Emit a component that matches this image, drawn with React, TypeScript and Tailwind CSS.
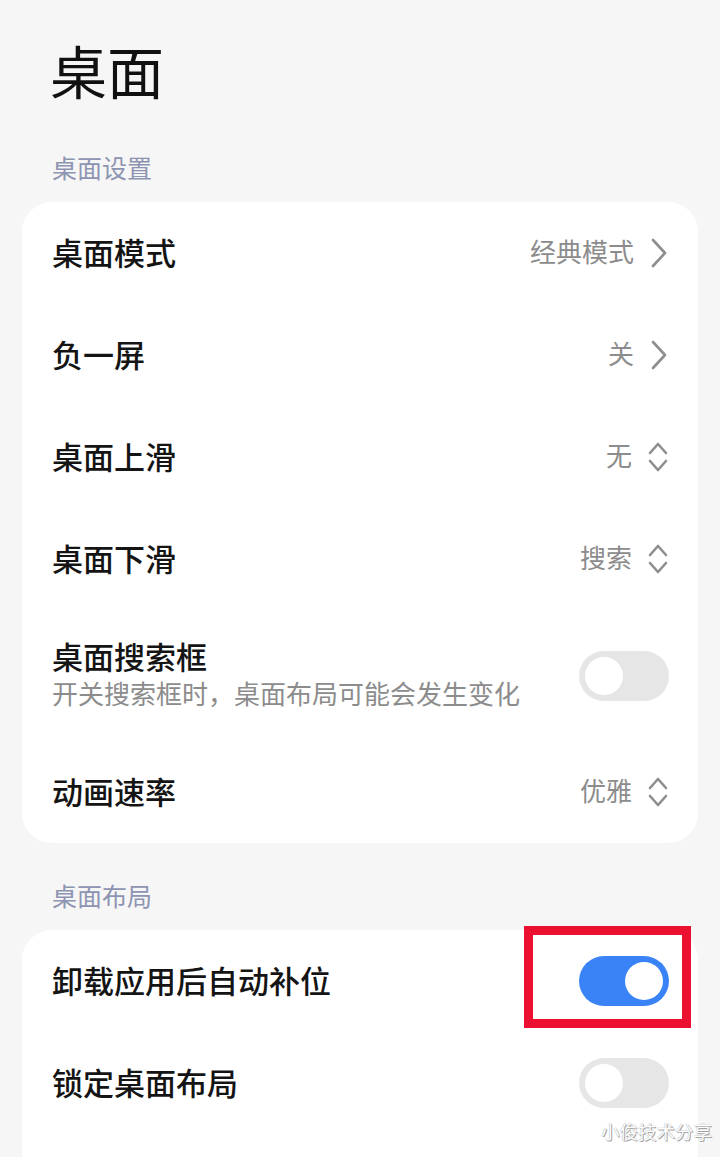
import React from "react";

const FONT = { fontFamily: '"Noto Sans CJK SC", "Noto Sans", sans-serif' };

function ChevronRight() {
  return (
    <svg width="18" height="30" viewBox="0 0 18 30" className="shrink-0">
      <path d="M3 2 L15 15 L3 28" fill="none" stroke="#8e8e8e" strokeWidth="2.6" strokeLinecap="round" strokeLinejoin="round" />
    </svg>
  );
}

function UpDown() {
  return (
    <svg width="20" height="32" viewBox="0 0 20 32" className="shrink-0">
      <path d="M2 12 L10 3 L18 12" fill="none" stroke="#8e8e8e" strokeWidth="2.6" strokeLinecap="round" strokeLinejoin="round" />
      <path d="M2 20 L10 29 L18 20" fill="none" stroke="#8e8e8e" strokeWidth="2.6" strokeLinecap="round" strokeLinejoin="round" />
    </svg>
  );
}

function Toggle({ on }: { on?: boolean }) {
  return (
    <div
      className={`w-[90px] h-[50px] rounded-full flex items-center px-[6px] shrink-0 ${
        on ? "bg-[#3a83f6] justify-end" : "bg-[#e6e6e6] justify-start"
      }`}
    >
      <div className="w-[38px] h-[38px] rounded-full bg-white" />
    </div>
  );
}

function Row({ label, value, icon }: { label: string; value: string; icon: "right" | "updown" }) {
  return (
    <div className="h-[102px] flex items-center justify-between pl-[30px] pr-[30px]">
      <span className="text-[31px] leading-none text-[#141414] font-medium -translate-y-[2px]">{label}</span>
      <div className="flex items-center gap-[16px]">
        <span className="text-[26px] leading-none text-[#8c8c8c] -translate-y-[2px]">{value}</span>
        {icon === "right" ? <ChevronRight /> : <UpDown />}
      </div>
    </div>
  );
}

function ToggleRow({ label, on }: { label: string; on?: boolean }) {
  return (
    <div className="h-[102px] flex items-center justify-between pl-[30px] pr-[29px]">
      <span className="text-[31px] leading-none text-[#141414] font-medium -translate-y-[2px]">{label}</span>
      <Toggle on={on} />
    </div>
  );
}

export default function App() {
  return (
    <div className="relative w-[720px] h-[1157px] overflow-hidden bg-[#f6f6f6]" style={FONT}>
      <div className="pl-[50px] pt-[39px] h-[99px]">
        <div className="text-[57px] leading-[60px] text-[#111111]">桌面</div>
      </div>

      <div className="pl-[52px] mt-[54px] h-[30px] text-[25px] leading-[30px] text-[#8d94b2] -translate-y-[1px]">桌面设置</div>

      <div className="mt-[19px] mx-[22px] bg-white rounded-[30px] overflow-hidden">
        <Row label="桌面模式" value="经典模式" icon="right" />
        <Row label="负一屏" value="关" icon="right" />
        <Row label="桌面上滑" value="无" icon="updown" />
        <Row label="桌面下滑" value="搜索" icon="updown" />
        <div className="h-[131px] flex items-center justify-between pl-[30px] pr-[29px]">
          <div className="flex flex-col -translate-y-[2px]">
            <span className="text-[31px] leading-[38px] text-[#141414] font-medium">桌面搜索框</span>
            <span className="text-[26px] leading-[36px] text-[#8c8c8c]">开关搜索框时，桌面布局可能会发生变化</span>
          </div>
          <Toggle />
        </div>
        <Row label="动画速率" value="优雅" icon="updown" />
      </div>

      <div className="pl-[52px] mt-[40px] h-[30px] text-[25px] leading-[30px] text-[#8d94b2] -translate-y-[3px]">桌面布局</div>

      <div className="mt-[17px] mx-[22px] bg-white rounded-t-[30px] h-[400px]">
        <ToggleRow label="卸载应用后自动补位" on />
        <ToggleRow label="锁定桌面布局" />
      </div>

      <div className="absolute left-[524px] top-[926px] w-[167px] h-[102px] border-[9px] border-[#ec1030]" />

      <div
        className="absolute left-[601px] top-[1118px] text-[18.5px] leading-[26px] text-white"
        style={{ textShadow: "0 0 1px #888, 1px 1px 0 #aaa" }}
      >
        小俊技术分享
      </div>
    </div>
  );
}
